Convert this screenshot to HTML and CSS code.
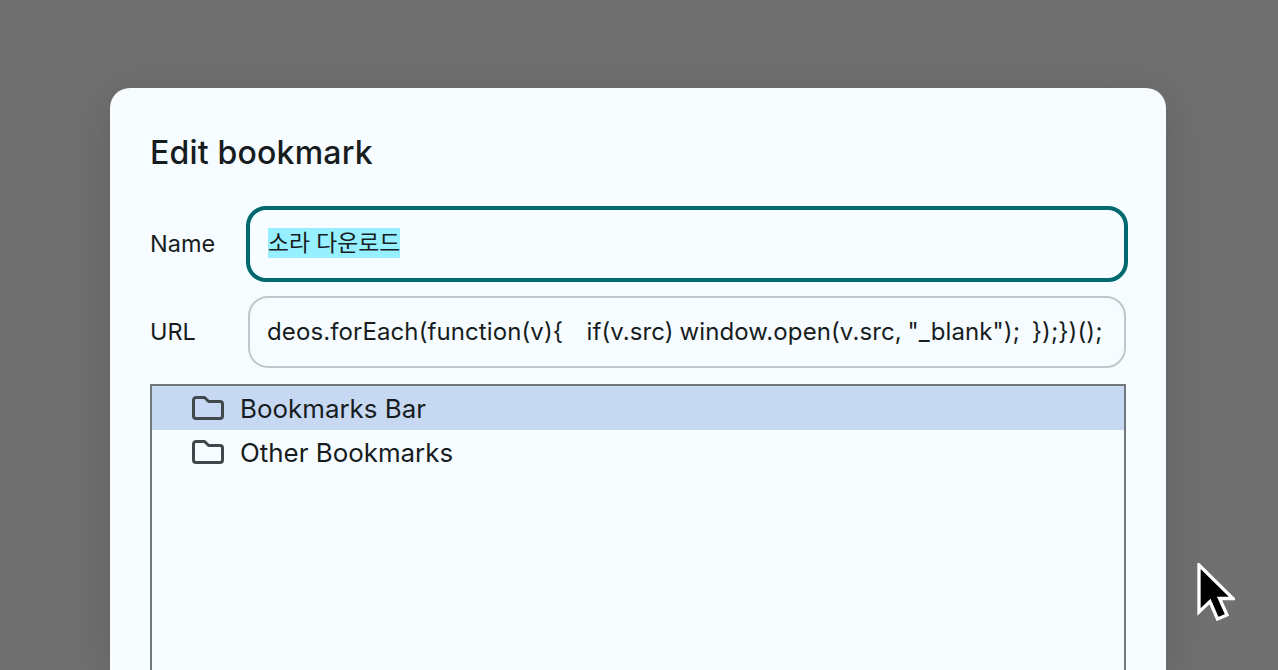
FILE: index.html
```html
<!DOCTYPE html>
<html lang="en">
<head>
<meta charset="utf-8">
<title>Edit bookmark</title>
<link rel="stylesheet" href="styles.css">
</head>
<body>
<main class="dialog">
  <h1 class="title">Edit bookmark</h1>
  <div class="row row-name">
    <label class="label label-raised">Name</label>
    <div class="field field-focus"><span class="selected">소라 다운로드</span></div>
  </div>
  <div class="row row-url">
    <label class="label label-raised">URL</label>
    <div class="field field-plain"><span class="url-text">deos.forEach(function(v){    if(v.src) window.open(v.src, "_blank");  });})();</span></div>
  </div>
  <div class="tree">
    <div class="tree-item tree-item-active">
      <svg class="folder" viewBox="0 0 32 24" width="32" height="24"><path d="M4 1.500h8.600l4 4H28a2.500 2.500 0 0 1 2.500 2.500V20a2.500 2.500 0 0 1-2.500 2.500H4A2.500 2.500 0 0 1 1.500 20V4A2.500 2.500 0 0 1 4 1.500z" fill="none" stroke="#41484b" stroke-width="3" stroke-linejoin="round"/></svg>
      <span class="tree-text">Bookmarks Bar</span>
    </div>
    <div class="tree-item">
      <svg class="folder" viewBox="0 0 32 24" width="32" height="24"><path d="M4 1.500h8.600l4 4H28a2.500 2.500 0 0 1 2.500 2.500V20a2.500 2.500 0 0 1-2.500 2.500H4A2.500 2.500 0 0 1 1.500 20V4A2.500 2.500 0 0 1 4 1.500z" fill="none" stroke="#41484b" stroke-width="3" stroke-linejoin="round"/></svg>
      <span class="tree-text">Other Bookmarks</span>
    </div>
  </div>
</main>
<svg class="cursor" viewBox="0 0 38 58" width="38" height="58"><path d="M2 2v47l11-10.500 7.500 17.500 9.500-4-7.500-16.500H36z" fill="#000" stroke="#fff" stroke-width="3.300" stroke-linejoin="miter"/></svg>
</body>
</html>
```

FILE: styles.css
```css
html, body {
  margin: 0;
  height: 100%;
  overflow: hidden;
}
body {
  background: #707070;
  color: #171d1e;
  font-family: Inter, "Noto Sans CJK KR", sans-serif;
  position: relative;
}
.dialog {
  box-sizing: border-box;
  width: 1056px;
  height: 582px;
  margin: 88px 0 0 110px;
  padding: 40px 40px 0 40px;
  background: #f6fcff;
  border-radius: 20px 20px 0 0;
  box-shadow: 0 8px 50px rgba(0, 0, 0, 0.14);
  overflow: hidden;
}
.title {
  margin: 0;
  font-size: 32px;
  line-height: 50px;
  height: 50px;
  font-weight: 500;
  letter-spacing: 0.2px;
}
.row {
  display: flex;
  align-items: center;
}
.row-name {
  margin-top: 28px;
  margin-right: -2px;
}
.row-url {
  margin-top: 14px;
}
.label {
  width: 96px;
  flex: none;
  font-size: 23.5px;
}
.label-raised {
  margin-bottom: 2px;
}
.field {
  flex: 1;
  box-sizing: border-box;
  display: flex;
  align-items: center;
  font-size: 23px;
  white-space: pre;
  overflow: hidden;
}
.field-focus {
  height: 76px;
  border: 4px solid #00696f;
  border-radius: 20px;
  padding-left: 18px;
}
.field-plain {
  height: 72px;
  margin-left: 2px;
  border: 2px solid #bfc8ca;
  border-radius: 20px;
  padding-left: 17px;
}
.url-text {
  font-size: 24px;
  word-spacing: -1px;
  letter-spacing: 0.1px;
  margin-bottom: 2px;
}
.selected {
  background: #97f0ff;
  line-height: 30px;
  margin-bottom: 2px;
  font-size: 22.8px;
}
.tree {
  box-sizing: border-box;
  margin-top: 16px;
  height: 400px;
  border: 2px solid #72787a;
  font-size: 25.9px;
}
.tree-item {
  display: flex;
  align-items: center;
  gap: 16px;
  height: 44px;
  padding-left: 40px;
}
.tree-item-active {
  background: #c7d9f2;
}
.folder {
  flex: none;
}
.cursor {
  position: absolute;
  left: 1197px;
  top: 563px;
}
```
